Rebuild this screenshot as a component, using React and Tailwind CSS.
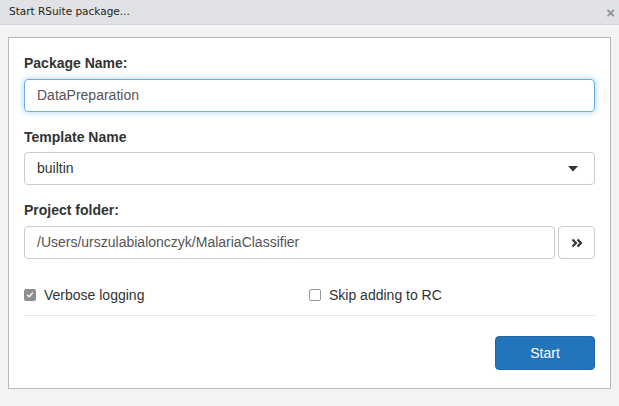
const font = { fontFamily: '"Liberation Sans", Arial, sans-serif' };

const Check = ({ checked, label }) => (
  <label className="flex h-[16px] items-center gap-[8px] text-[14px] leading-[16px] text-[#333]">
    {checked ? (
      <span className="flex h-[12px] w-[12px] items-center justify-center rounded-[2px] bg-[#8e8e93]">
        <svg width="8" height="8" viewBox="0 0 8 8">
          <path d="M1.5 4.2 L3.2 5.8 L6.5 2" stroke="#fff" strokeWidth="1.3" fill="none" strokeLinecap="round" strokeLinejoin="round" />
        </svg>
      </span>
    ) : (
      <span className="h-[12px] w-[12px] rounded-[2px] border border-[#9a9a9a] bg-white" />
    )}
    {label}
  </label>
);

export default function App() {
  return (
    <div className="flex h-[406px] w-[619px] flex-col bg-[#f2f3f2]" style={font}>
      <div className="flex h-[25px] items-center justify-between border-b border-[#d4d5d8] bg-[#e1e2e5] pl-[9px] pr-[4px]">
        <span className="text-[#222]" style={{ fontFamily: '"DejaVu Sans", sans-serif', fontSize: "10.5px" }}>
          Start RSuite package...
        </span>
        <span className="text-[15px] font-bold leading-none text-[#8f8f8f]">×</span>
      </div>
      <div className="mx-[8px] mt-[12px] flex h-[352px] flex-col border border-[#b9b9b9] bg-white px-[15px] pt-[17px]">
        <div className="text-[14px] font-bold leading-[16px] text-[#333]">Package Name:</div>
        <div className="mt-[8px] flex h-[33px] items-center rounded-[4px] border border-[#66afe9] px-[12px] text-[14px] text-[#555] shadow-[0_0_6px_rgba(102,175,233,0.6)]">
          DataPreparation
        </div>
        <div className="mt-[17px] text-[14px] font-bold leading-[16px] text-[#333]">Template Name</div>
        <div className="mt-[7px] flex h-[33px] items-center justify-between rounded-[4px] border border-[#ccc] pl-[12px] pr-[16px] text-[14px] text-[#333]">
          builtin
          <svg width="10" height="6" viewBox="0 0 10 6">
            <path d="M0 0 L10 0 L5 5.5 Z" fill="#333" />
          </svg>
        </div>
        <div className="mt-[17px] text-[14px] font-bold leading-[16px] text-[#333]">Project folder:</div>
        <div className="mt-[8px] flex gap-[3px]">
          <div className="flex h-[33px] flex-1 items-center rounded-[4px] border border-[#ccc] px-[12px] text-[14px] text-[#555]">
            /Users/urszulabialonczyk/MalariaClassifier
          </div>
          <div className="flex h-[33px] w-[37px] items-center justify-center rounded-[4px] border border-[#ccc] text-[#333]">
            <svg width="12" height="10" viewBox="0 0 12 10">
              <path d="M1.5 1.5 L5 5 L1.5 8.5 M6.5 1.5 L10 5 L6.5 8.5" stroke="#333" strokeWidth="2.2" fill="none" />
            </svg>
          </div>
        </div>
        <div className="mt-[28px] flex">
          <div className="w-[285px]">
            <Check checked label="Verbose logging" />
          </div>
          <Check label="Skip adding to RC" />
        </div>
        <div className="mt-[12px] border-t border-[#e5e5e5]" />
        <div className="mt-[20px] flex justify-end">
          <button className="h-[34px] w-[100px] rounded-[4px] border border-[#2167a9] bg-[#2275bb] text-[14px] text-white">
            Start
          </button>
        </div>
      </div>
    </div>
  );
}
